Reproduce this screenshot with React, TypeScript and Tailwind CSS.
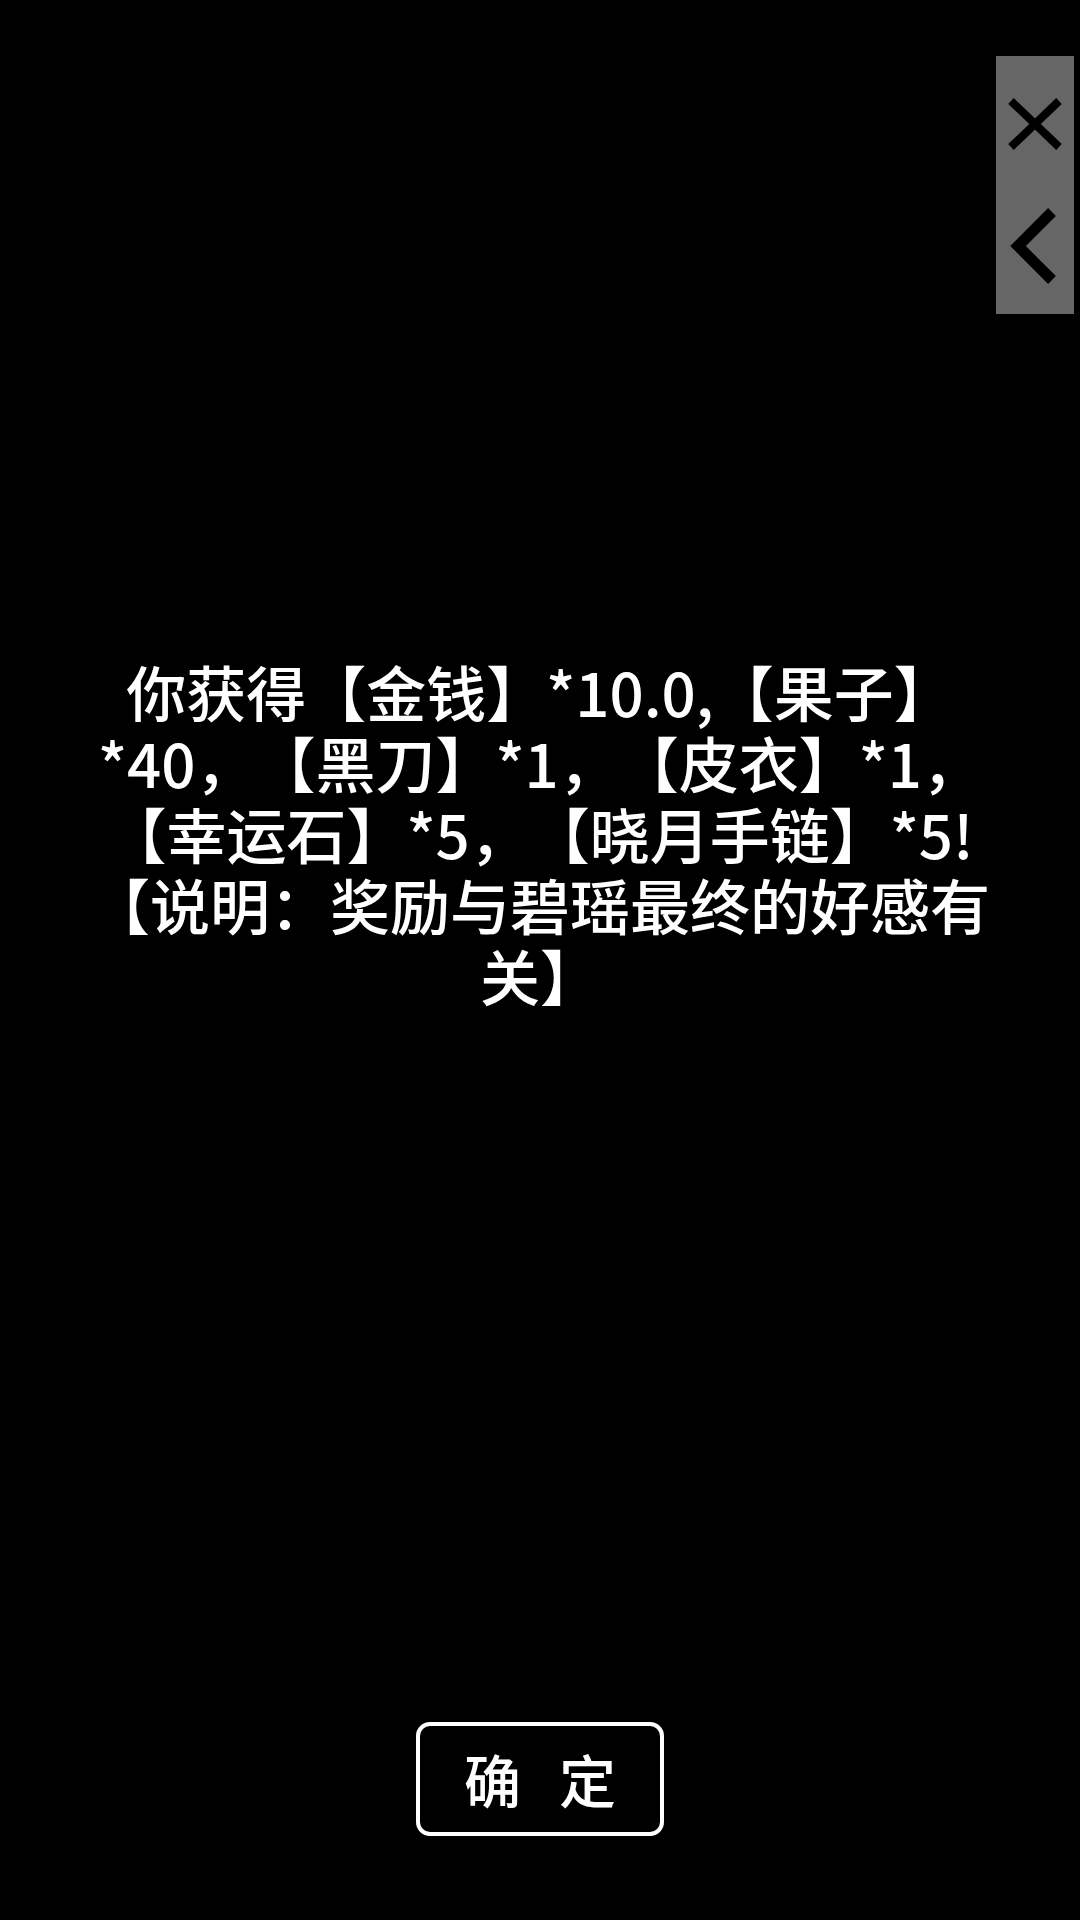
export default function App() {
  const font = { fontFamily: '"Noto Sans CJK SC", "Noto Sans", sans-serif' };
  return (
    <div className="relative flex h-[1920px] w-[1080px] flex-col bg-black text-white" style={font}>
      {/* side tools */}
      <div className="absolute left-[996px] top-[56px] flex h-[258px] w-[78px] flex-col bg-[#666666]">
        <button className="mt-[40px] block h-[56px] w-[78px]">
          <svg width="78" height="56" viewBox="0 0 78 56">
            <path d="M15 5 L63 51 M63 5 L15 51" stroke="#000" strokeWidth="8" fill="none" />
          </svg>
        </button>
        <button className="mt-[54px] block h-[80px] w-[78px]">
          <svg width="78" height="80" viewBox="0 0 78 80">
            <path d="M56 6 L22 40 L56 74" stroke="#000" strokeWidth="11" fill="none" />
          </svg>
        </button>
      </div>

      {/* reward message */}
      <div className="px-[85px] pt-[655px] text-center text-[60px] font-medium leading-[71px] [text-spacing-trim:space-all]">
        你获得【金钱】*10.0,【果子】*40，【黑刀】*1，【皮衣】*1，【幸运石】*5，【晓月手链】*5!【说明：奖励与碧瑶最终的好感有关】
      </div>

      {/* confirm */}
      <button className="mb-[84px] mt-auto flex h-[114px] w-[248px] items-center justify-center gap-[38px] self-center rounded-[14px] border-[4px] border-white text-[57px] font-medium text-white">
        <span>确</span>
        <span>定</span>
      </button>
    </div>
  );
}
